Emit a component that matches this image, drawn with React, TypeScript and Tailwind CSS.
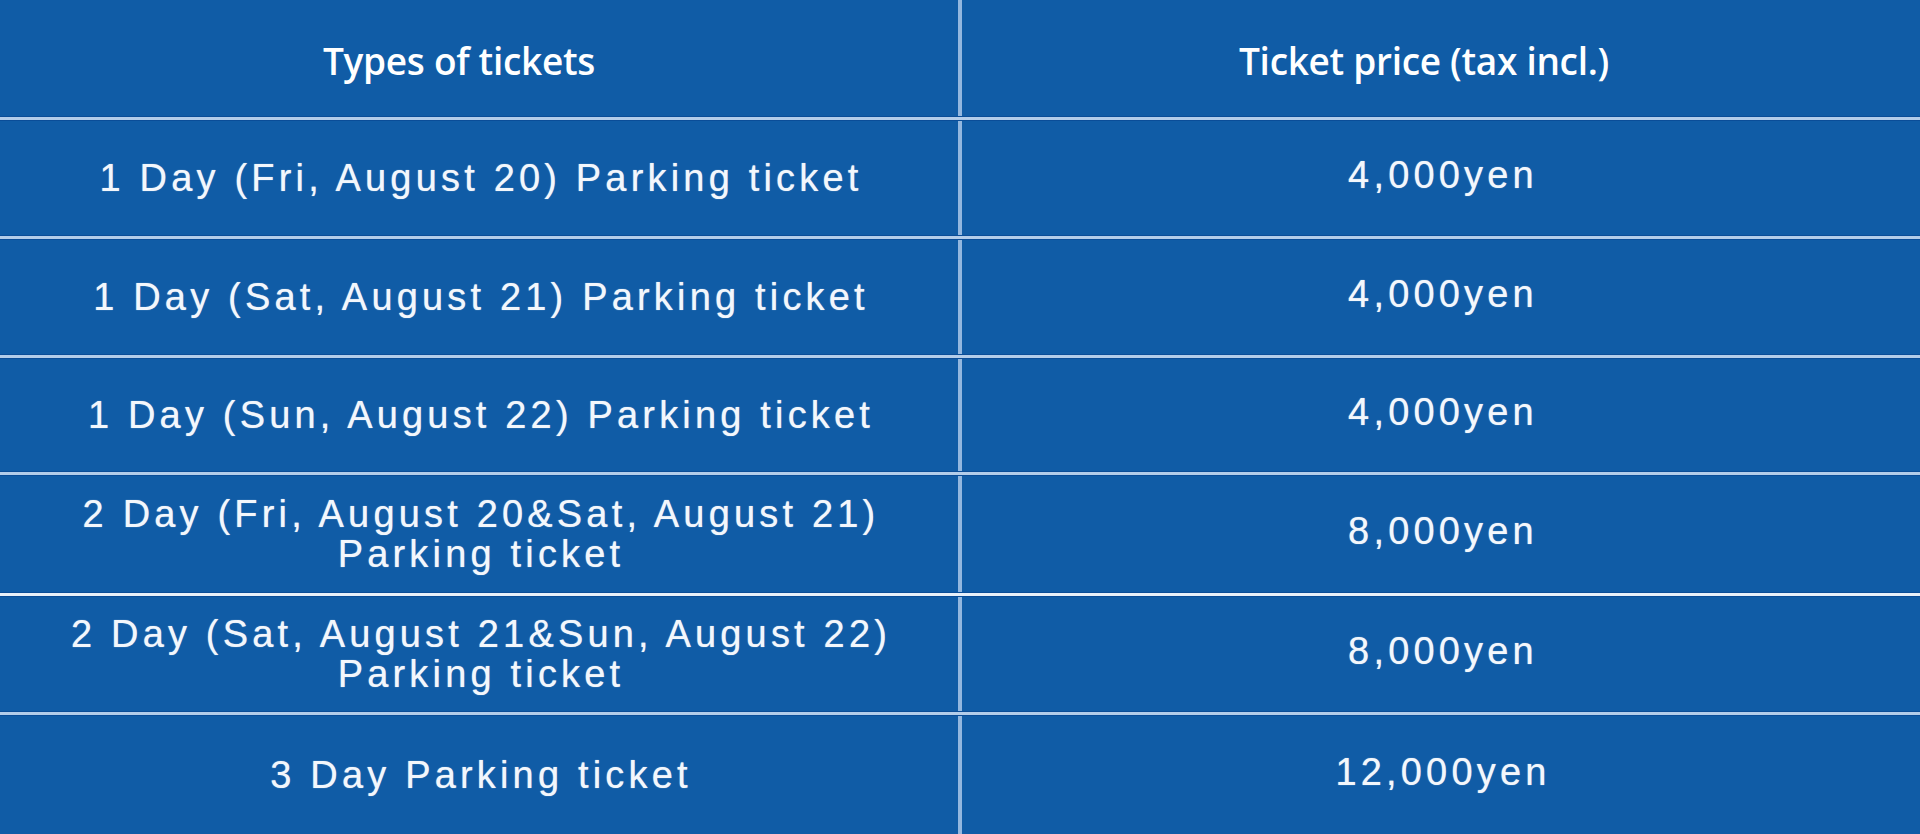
const rows = [
  { h: "h-[114px]", name: ["1 Day (Fri, August 20) Parking ticket"], price: "4,000yen" },
  { h: "h-[114px]", name: ["1 Day (Sat, August 21) Parking ticket"], price: "4,000yen" },
  { h: "h-[112px]", name: ["1 Day (Sun, August 22) Parking ticket"], price: "4,000yen" },
  { h: "h-[116px]", name: ["2 Day (Fri, August 20&Sat, August 21)", "Parking ticket"], price: "8,000yen" },
  { h: "h-[114px]", name: ["2 Day (Sat, August 21&Sun, August 22)", "Parking ticket"], price: "8,000yen" },
  { h: "h-[118px]", name: ["3 Day Parking ticket"], price: "12,000yen" },
]

function HLine({ bright }: { bright?: boolean }) {
  return (
    <div
      className={
        "h-[5px] w-full border-y border-[#0a4d98] " +
        (bright ? "bg-[#e9f1fa]" : "bg-[#b3cdea]")
      }
    />
  )
}

function VLine() {
  return <div className="w-[4px] shrink-0 bg-[#93b7df]" />
}

export default function App() {
  const head = "font-['Open_Sans',sans-serif] font-semibold text-[37px] text-white tracking-[-0.3px]"
  const cell =
    "font-['Liberation_Sans',Arial,sans-serif] text-[38px] leading-[40px] tracking-[0.11em] text-[#f3f7fc] text-center [text-shadow:0_0_1px_rgba(255,255,255,0.7)]"

  return (
    <div className="w-[1920px] h-[834px] overflow-hidden bg-[#105ca6] flex flex-col">
      <div className="flex h-[117px]">
        <div className={"w-[958px] shrink-0 flex items-center justify-center pt-[6px] pr-[40px] " + head}>
          Types of tickets
        </div>
        <VLine />
        <div className={"w-[958px] shrink-0 flex items-center justify-center pt-[6px] pr-[34px] " + head}>
          Ticket price (tax incl.)
        </div>
      </div>
      {rows.map((r, i) => (
        <div key={i}>
          <HLine bright={i === 4} />
          <div className={"flex " + r.h}>
            <div className={"w-[958px] shrink-0 flex flex-col items-center justify-center pl-[4px] " + cell}>
              {r.name.map((line, j) => (
                <span key={j}>{line}</span>
              ))}
            </div>
            <VLine />
            <div className={"w-[958px] shrink-0 flex items-center justify-center pl-[4px] pb-[6px] " + cell}>
              {r.price}
            </div>
          </div>
        </div>
      ))}
    </div>
  )
}
